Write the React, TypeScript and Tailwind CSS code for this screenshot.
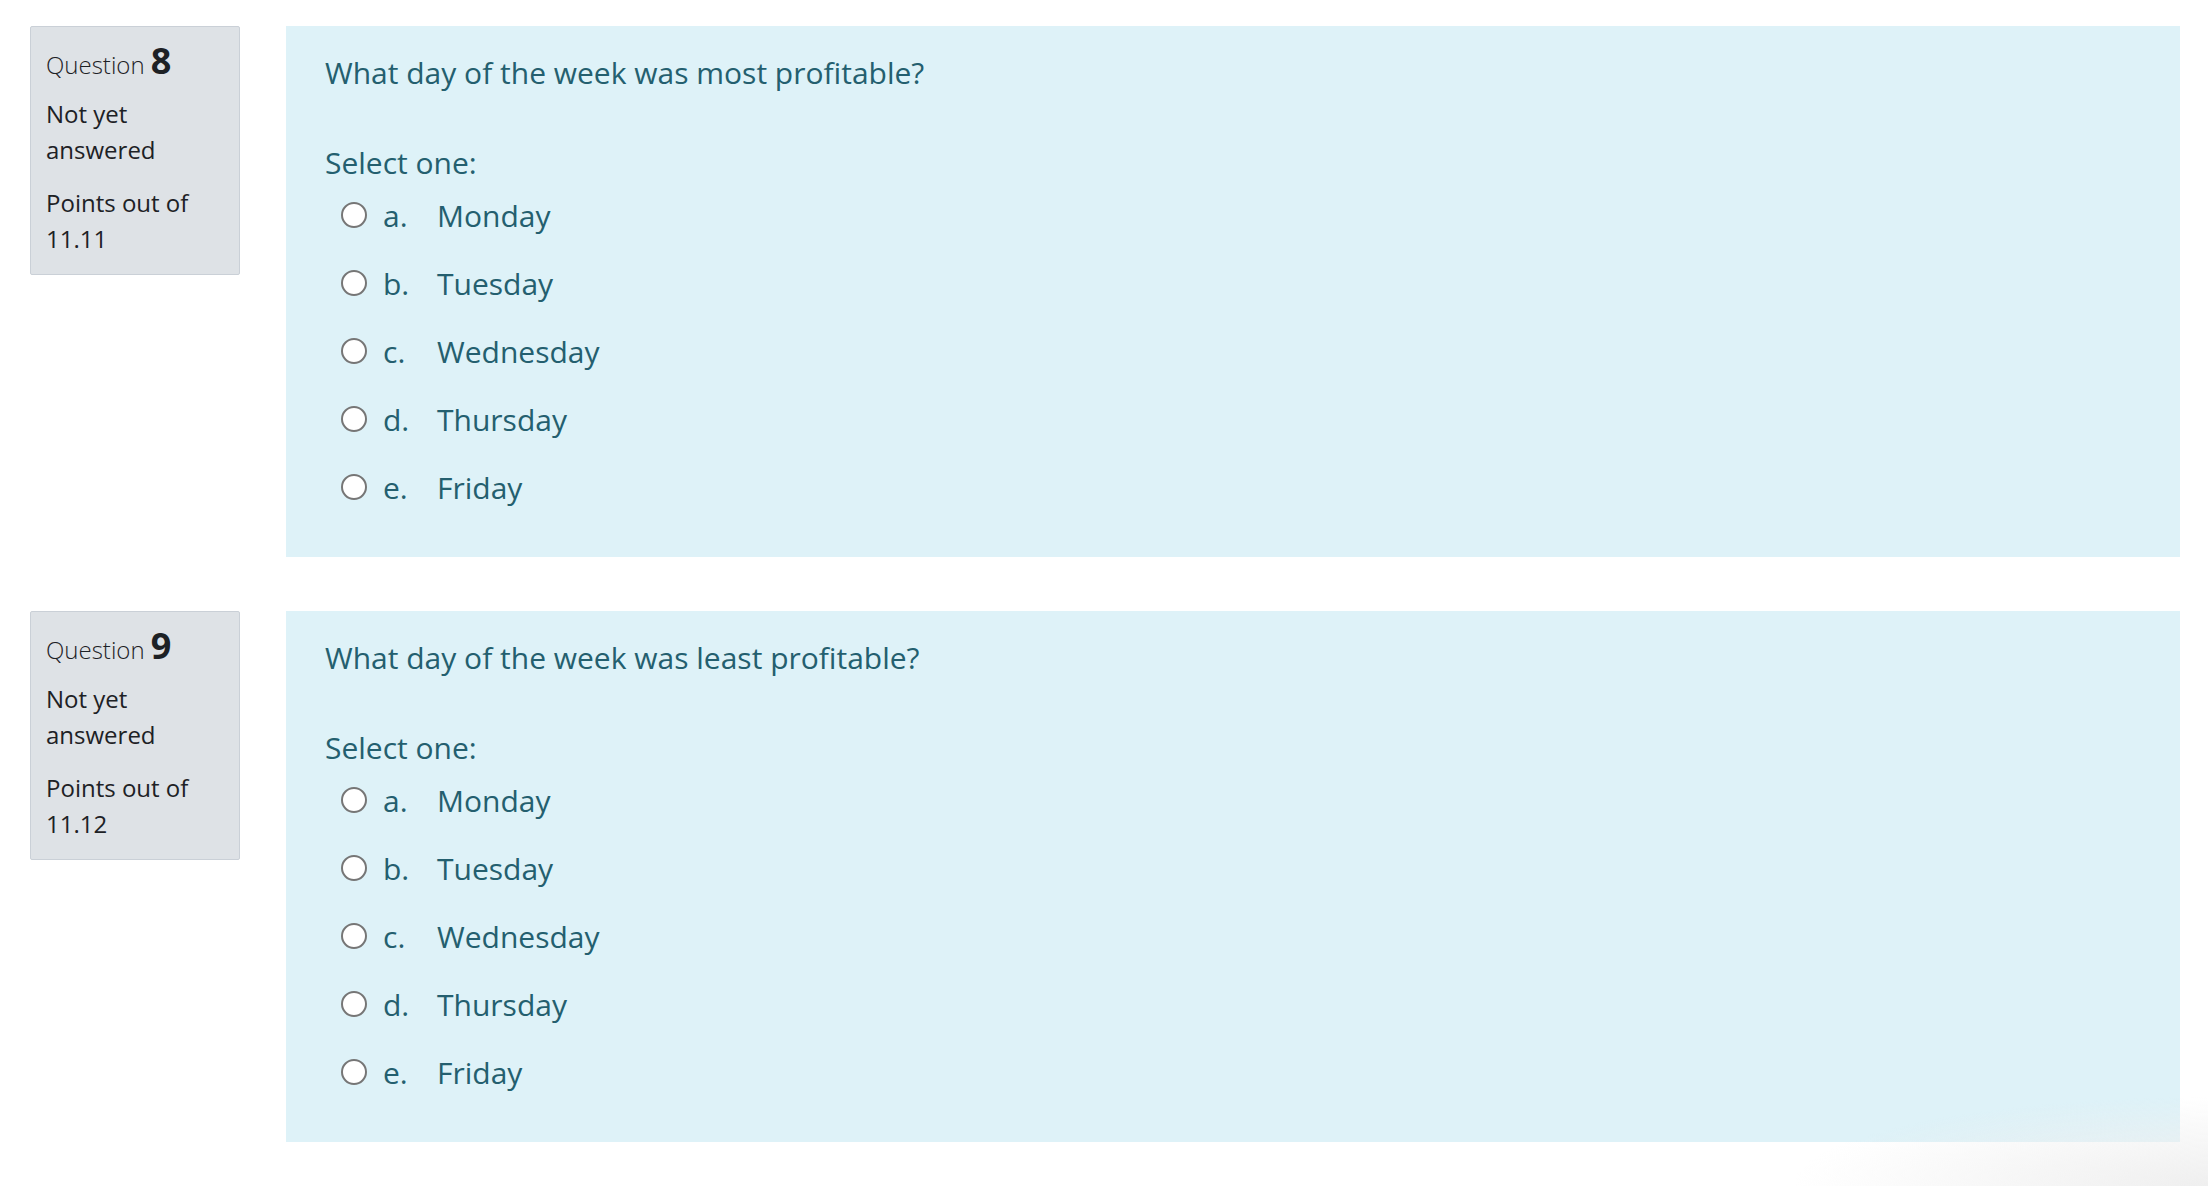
const questions = [
  { no: 8, points: "11.11", text: "What day of the week was most profitable?" },
  { no: 9, points: "11.12", text: "What day of the week was least profitable?" },
];

const choices = [
  { letter: "a", label: "Monday" },
  { letter: "b", label: "Tuesday" },
  { letter: "c", label: "Wednesday" },
  { letter: "d", label: "Thursday" },
  { letter: "e", label: "Friday" },
];

type QuestionProps = {
  no: number;
  points: string;
  text: string;
};

const Question = ({ no, points, text }: QuestionProps) => {
  return (
    <div className="mb-[54px] flex gap-[46px]">
      <div className="w-[210px] shrink-0 self-start rounded-[2px] border border-[#cad0d7] bg-[#dee2e6] px-[15px] pt-[16px] pb-[17px] text-[24px] leading-[36px] text-[#1d2125]">
        <h3 className="mb-[13px] font-light">
          Question <span className="text-[36px] font-bold">{no}</span>
        </h3>
        <div>Not yet answered</div>
        <div className="mt-[17px]">Points out of {points}</div>
      </div>
      <div className="flex-1 bg-[#def2f8] pt-[24px] pr-[30px] pb-[36px] pl-[39px] text-[30px] leading-[45px] text-[#245f6f]">
        <p className="mb-[45px]">{text}</p>
        <div className="h-[41px]">Select one:</div>
        <div>
          {choices.map((choice) => (
            <label key={choice.letter} className="flex h-[68px] items-center">
              <input
                type="radio"
                name={`q${no}`}
                className="m-0 mr-[16px] ml-[16px] h-[26px] w-[26px] shrink-0 appearance-none rounded-full border-2 border-[#767676] bg-white"
              />
              <span className="w-[54px]">{choice.letter}.</span>
              <span>{choice.label}</span>
            </label>
          ))}
        </div>
      </div>
    </div>
  );
};

export default function App() {
  return (
    <div className="relative min-h-screen bg-white pt-[26px] pr-[28px] pl-[30px] font-['Open_Sans',sans-serif]">
      {questions.map((q) => (
        <Question key={q.no} {...q} />
      ))}
      <div className="pointer-events-none fixed right-0 bottom-0 h-[90px] w-[420px] bg-[radial-gradient(ellipse_at_bottom_right,#efefef,transparent_70%)]" />
    </div>
  );
}
